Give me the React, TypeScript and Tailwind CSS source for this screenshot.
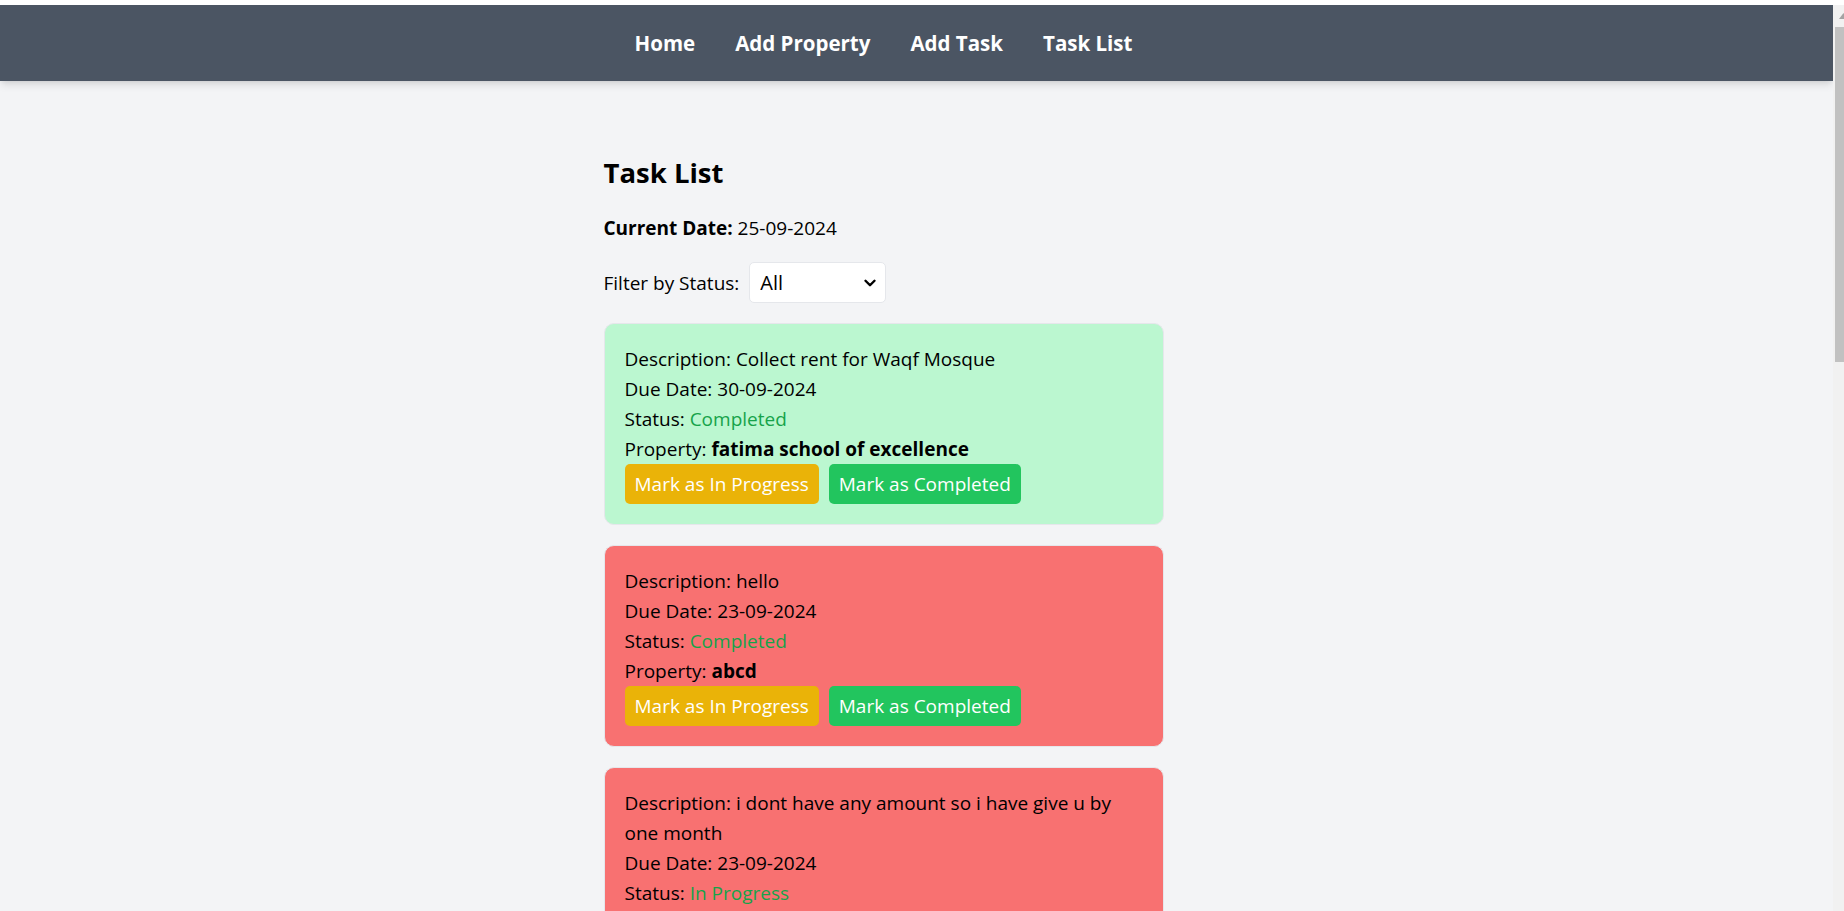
import { ChevronDown } from "lucide-react";

type Task = {
  description: string;
  dueDate: string;
  status: string;
  property: string;
  overdue: boolean;
};

const tasks: Task[] = [
  {
    description: "Collect rent for Waqf Mosque",
    dueDate: "30-09-2024",
    status: "Completed",
    property: "fatima school of excellence",
    overdue: false,
  },
  {
    description: "hello",
    dueDate: "23-09-2024",
    status: "Completed",
    property: "abcd",
    overdue: true,
  },
  {
    description: "i dont have any amount so i have give u by one month",
    dueDate: "23-09-2024",
    status: "In Progress",
    property: "abcd",
    overdue: true,
  },
];

const links = ["Home", "Add Property", "Add Task", "Task List"];

function Scrollbar() {
  return (
    <div className="w-[11px] flex-none overflow-hidden bg-[#f1f1f1] pl-[2px]">
      <div className="w-[17px]">
        <div className="flex h-[22px] items-center justify-center">
          <svg width="9" height="6" viewBox="0 0 9 6">
            <polygon points="0,6 4.5,0 9,6" fill="#a3a3a3" />
          </svg>
        </div>
        <div className="h-[335px] bg-[#c1c1c1]" />
      </div>
    </div>
  );
}

function TaskCard({ task }: { task: Task }) {
  return (
    <div
      className={`mb-[20px] rounded-[10px] border border-[#e5e7eb] p-[20px] ${
        task.overdue ? "bg-[#f87171]" : "bg-[#bbf7d0]"
      }`}
    >
      <p>Description: {task.description}</p>
      <p>Due Date: {task.dueDate}</p>
      <p>
        Status: <span className="text-[#16a34a]">{task.status}</span>
      </p>
      <p>
        Property: <span className="font-bold">{task.property}</span>
      </p>
      <div className="flex gap-[10px]">
        <button className="rounded-[5px] bg-[#eab308] px-[10px] py-[5px] text-white">
          Mark as In Progress
        </button>
        <button className="rounded-[5px] bg-[#22c55e] px-[10px] py-[5px] text-white">
          Mark as Completed
        </button>
      </div>
    </div>
  );
}

export default function App() {
  return (
    <div className="flex h-[911px] w-[1844px] flex-col overflow-hidden bg-white font-['Open_Sans','Noto_Sans',sans-serif] text-[19px] leading-[30px] text-black">
      <div className="h-[5px] flex-none bg-white" />
      <div className="flex min-h-0 flex-1">
        <div className="w-[1833px] flex-none overflow-hidden bg-[#f3f4f6]">
          <nav className="relative z-10 flex h-[76px] bg-[#4b5563] shadow-[0_5px_8px_-1px_rgba(0,0,0,0.1),0_2px_5px_-2px_rgba(0,0,0,0.1)]">
            <div className="flex w-[1767px] items-center justify-center gap-[40px]">
              {links.map((l) => (
                <a key={l} href="#" className="text-[20.5px] font-bold text-white">
                  {l}
                </a>
              ))}
            </div>
          </nav>

          <main className="flex w-[1767px] justify-center pt-[72px]">
            <div className="w-[560px]">
              <h1 className="mb-[20px] text-[27.5px] font-bold leading-[40px]">Task List</h1>
              <p className="mb-[19px]">
                <strong>Current Date:</strong> 25-09-2024
              </p>
              <div className="mb-[20px] flex items-center">
                <label className="mr-[10px]">Filter by Status:</label>
                <div className="relative">
                  <select className="h-[41px] w-[137px] appearance-none rounded-[5px] border border-[#e5e7eb] bg-white pl-[10px] text-[20px] outline-none">
                    <option>All</option>
                    <option>Pending</option>
                    <option>In Progress</option>
                    <option>Completed</option>
                  </select>
                  <ChevronDown
                    size={18}
                    strokeWidth={3.2}
                    className="pointer-events-none absolute right-[7px] top-[12px] text-black"
                  />
                </div>
              </div>

              {tasks.map((t, i) => (
                <TaskCard key={i} task={t} />
              ))}
            </div>
          </main>
        </div>
        <Scrollbar />
      </div>
    </div>
  );
}
